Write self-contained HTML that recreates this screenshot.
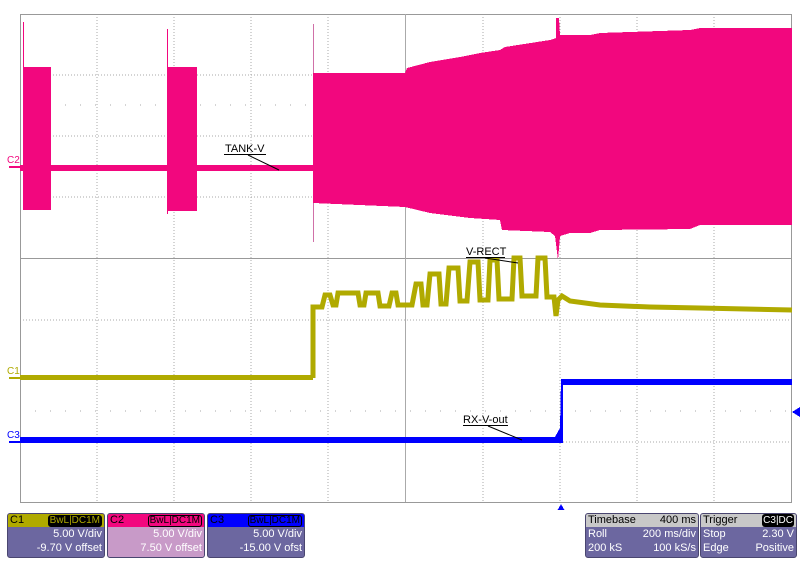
<!DOCTYPE html>
<html><head><style>
body{margin:0;background:#fff;width:805px;height:570px;overflow:hidden;font-family:"Liberation Sans",sans-serif;position:relative}
.p{position:absolute;top:513px;height:43px;border-radius:3px;background:#6c67a0;color:#fff;font-size:11px;overflow:hidden;border:1px solid #4a4670}
.h{height:13px;line-height:13px;padding:0 2px;position:relative}
.r{text-align:right;padding-right:2px;line-height:14px}
.tag{position:absolute;top:1px;font-size:10px;line-height:10px;border-radius:3px;padding:0 1px;border:1px solid}
.row{display:flex;justify-content:space-between;padding:0 2px;line-height:14px}
</style></head><body>
<svg width="805" height="510" style="position:absolute;left:0;top:0" shape-rendering="crispEdges">
<g stroke="#aaa" stroke-width="1" stroke-dasharray="1,2">
<line x1="97" y1="14" x2="97" y2="502"/><line x1="174" y1="14" x2="174" y2="502"/><line x1="251" y1="14" x2="251" y2="502"/><line x1="328" y1="14" x2="328" y2="502"/>
<line x1="483" y1="14" x2="483" y2="502"/><line x1="560" y1="14" x2="560" y2="502"/><line x1="637" y1="14" x2="637" y2="502"/><line x1="714" y1="14" x2="714" y2="502"/>
<line x1="20" y1="75" x2="792" y2="75"/><line x1="20" y1="136" x2="792" y2="136"/><line x1="20" y1="197" x2="792" y2="197"/>
<line x1="20" y1="320" x2="792" y2="320"/><line x1="20" y1="442" x2="792" y2="442"/>
</g>
<g stroke="#aaa" stroke-dasharray="1,14"><line x1="20" y1="105" x2="792" y2="105"/><line x1="20" y1="411" x2="792" y2="411"/></g>
<rect x="20.5" y="14.5" width="771" height="488" fill="none" stroke="#999"/>
<line x1="20" y1="258.5" x2="792" y2="258.5" stroke="#999"/>
<line x1="405.5" y1="14" x2="405.5" y2="502" stroke="#aaa"/>
<g fill="#f2077e">
<rect x="20" y="165" width="293" height="6"/>
<rect x="23" y="67" width="28" height="143"/><rect x="23" y="22" width="1" height="50"/>
<rect x="168" y="67" width="29" height="144"/><rect x="167" y="29" width="1" height="185"/>
<rect x="313" y="24" width="1" height="218" fill="#d070a8"/>
<polygon points="313,73 405,73 407,68 430,62 460,57 480,53 500,50 505,47 550,40 556,38 556,18 559,18 560,35 590,35 600,33 690,30 700,28 792,28 792,225 700,225 690,229 600,230 590,233 570,233 560,236 558,260 555,236 550,232 502,230 500,220 470,218 430,213 405,207 313,203"/>
</g>
<rect x="20" y="375" width="293" height="5" fill="#b0aa00"/>
<polyline fill="none" stroke="#b0aa00" stroke-width="5" shape-rendering="auto" points="313,378 313,307 322,307 325,295 330,295 333,305 336,305 338,293 358,293 360,305 364,305 366,293 378,293 380,306 389,306 392,293 396,293 398,305 412,305 416,284 421,284 423,305 427,305 430,274 439,274 441,304 446,304 449,268 458,268 460,301 467,301 470,262 478,262 480,300 488,300 490,260 497,260 499,299 512,299 514,258 520,258 522,296 536,296 538,258 545,258 547,297 554,297 556,316 558,300 562,296 570,301 600,305 650,307 700,308 792,310"/>
<g fill="#0000ff">
<rect x="20" y="437" width="537" height="6"/>
<polygon points="555,437 560,428 561,379 792,379 792,385 563,385 563,443 555,443"/>
<polygon points="792,412 800,407 800,417"/>
<polygon points="561,504 557,511 565,511" />
</g>
<rect x="9" y="166" width="11" height="2" fill="#f2077e"/>
<rect x="9" y="377" width="11" height="2" fill="#b0aa00"/>
<rect x="9" y="441" width="11" height="2" fill="#0000ff"/>
<g font-family="Liberation Sans,sans-serif" font-size="10">
<text x="7" y="163" fill="#f2077e">C2</text>
<text x="7" y="374" fill="#b0aa00">C1</text>
<text x="7" y="438" fill="#0000ff">C3</text>
</g>
<g font-family="Liberation Sans,sans-serif" font-size="11" fill="#000">
<text x="225" y="152">TANK-V</text>
<text x="466" y="255">V-RECT</text>
<text x="463" y="423">RX-V-out</text>
</g>
<g stroke="#000" stroke-width="1" shape-rendering="auto">
<line x1="224" y1="154.5" x2="266" y2="154.5"/><line x1="248" y1="155" x2="279" y2="170"/>
<line x1="466" y1="257.5" x2="505" y2="257.5"/><line x1="485" y1="258" x2="518" y2="263"/>
<line x1="463" y1="425.5" x2="508" y2="425.5"/><line x1="488" y1="426" x2="522" y2="440"/>
</g>
</svg>

<div class="p" style="left:7px;width:96px">
<div class="h" style="background:#b0aa00;color:#000">C1<span class="tag" style="right:2px;background:#000;color:#b0aa00;border-color:#000">BwL|DC1M</span></div>
<div class="r">5.00 V/div</div><div class="r">-9.70 V offset</div></div>
<div class="p" style="left:107px;width:96px;background:#c89ac8">
<div class="h" style="background:#f2077e;color:#000">C2<span class="tag" style="right:2px;background:#f2077e;color:#000;border-color:#000">BwL|DC1M</span></div>
<div class="r">5.00 V/div</div><div class="r">7.50 V offset</div></div>
<div class="p" style="left:207px;width:96px">
<div class="h" style="background:#0000ff;color:#000">C3<span class="tag" style="right:2px;background:#0000ff;color:#000;border-color:#000">BwL|DC1M</span></div>
<div class="r">5.00 V/div</div><div class="r">-15.00 V ofst</div></div>
<div class="p" style="left:585px;width:112px">
<div class="row" style="background:#c8c8c8;color:#000;line-height:13px"><span>Timebase</span><span>400 ms</span></div>
<div class="row"><span>Roll</span><span>200 ms/div</span></div>
<div class="row"><span>200 kS</span><span>100 kS/s</span></div></div>
<div class="p" style="left:700px;width:95px">
<div class="row" style="background:#c8c8c8;color:#000;line-height:13px"><span>Trigger</span><span style="background:#000;color:#fff;font-size:10px;border-radius:3px;padding:0 1px">C3|DC</span></div>
<div class="row"><span>Stop</span><span>2.30 V</span></div>
<div class="row"><span>Edge</span><span>Positive</span></div></div>
</body></html>
